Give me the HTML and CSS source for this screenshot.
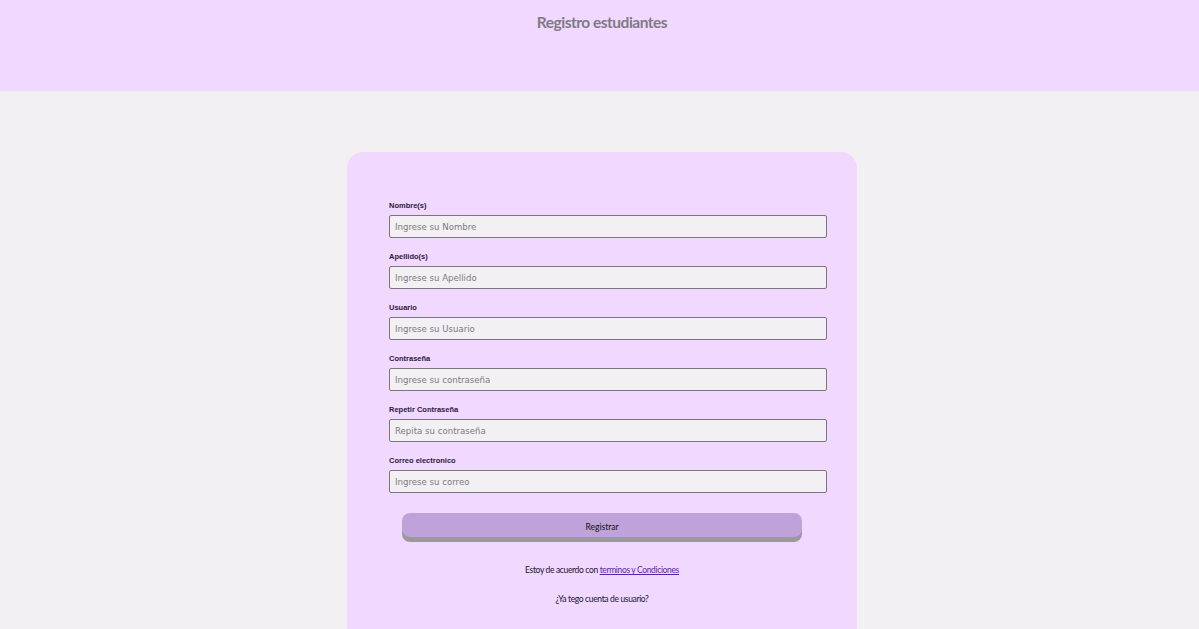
FILE: index.html
```html
<!DOCTYPE html>
<html lang="es">
<head>
<meta charset="utf-8">
<title>Registro estudiantes</title>
<link rel="stylesheet" href="styles.css">
</head>
<body>
<header class="top">
  <h1 class="title">Registro estudiantes</h1>
</header>
<main class="main">
  <form class="card">
    <label class="label" for="n">Nombre(s)</label>
    <input class="field" id="n" type="text" placeholder="Ingrese su Nombre">
    <label class="label" for="a">Apellido(s)</label>
    <input class="field" id="a" type="text" placeholder="Ingrese su Apellido">
    <label class="label" for="u">Usuario</label>
    <input class="field" id="u" type="text" placeholder="Ingrese su Usuario">
    <label class="label" for="c">Contraseña</label>
    <input class="field" id="c" type="password" placeholder="Ingrese su contraseña">
    <label class="label" for="r">Repetir Contraseña</label>
    <input class="field" id="r" type="password" placeholder="Repita su contraseña">
    <label class="label" for="e">Correo electronico</label>
    <input class="field" id="e" type="email" placeholder="Ingrese su correo">
    <button class="btn" type="button">Registrar</button>
    <p class="note">Estoy de acuerdo con <a class="link" href="#">terminos y Condiciones</a></p>
    <p class="note">¿Ya tego cuenta de usuario?</p>
  </form>
</main>
</body>
</html>
```
FILE: styles.css
```css
* { box-sizing: border-box; }
html, body { margin: 0; padding: 0; }
body {
  background: #f3f0f4;
  font-family: "Lato", "Open Sans", sans-serif;
  min-height: 629px;
  overflow: hidden;
}
.top {
  background: #f0d8fe;
  height: 91px;
  display: flex;
  justify-content: center;
  padding-left: 5px;
}
.title {
  margin: 12px 0 0;
  font-family: "Lato", sans-serif;
  font-weight: 700;
  font-size: 15.5px;
  line-height: 20px;
  letter-spacing: -0.5px;
  color: #7e7a86;
}
.main {
  display: flex;
  justify-content: center;
  padding-top: 61px;
  padding-left: 5px;
}
.card {
  width: 510px;
  min-height: 520px;
  background: #f0d8fe;
  border-radius: 16px;
  padding: 49px 30px 40px 42px;
  display: flex;
  flex-direction: column;
}
.label {
  font-family: "Liberation Sans", sans-serif;
  font-weight: 700;
  font-size: 7.5px;
  line-height: 10px;
  color: #2b1840;
  margin-bottom: 4px;
}
.field {
  width: 438px;
  height: 23px;
  margin: 0 0 14px;
  padding: 0 5px;
  background: #f3f0f4;
  border: 1px solid #7a7680;
  border-radius: 2px;
  font-family: "DejaVu Sans", sans-serif;
  font-size: 8.6px;
  color: #333;
  outline: none;
}
.field::placeholder { color: #7b7b7b; }
.btn {
  align-self: flex-start;
  margin: 6px 0 0 13px;
  width: 400px;
  height: 24px;
  border: none;
  border-radius: 8px;
  background: #c0a2da;
  box-shadow: 0 5px 0 #9c989e;
  font-family: "Lato", sans-serif;
  font-size: 8.5px;
  color: #111;
  padding: 3px 0 0;
}
.note {
  margin: 28px 0 0;
  text-align: center;
  width: 426px;
  font-family: "Lato", sans-serif;
  font-size: 8.5px;
  line-height: 11px;
  color: #1a1430;
  letter-spacing: -0.35px;
}
.note + .note { margin-top: 18px; }
.link { color: #5c1ea6; text-decoration: underline; }
```
